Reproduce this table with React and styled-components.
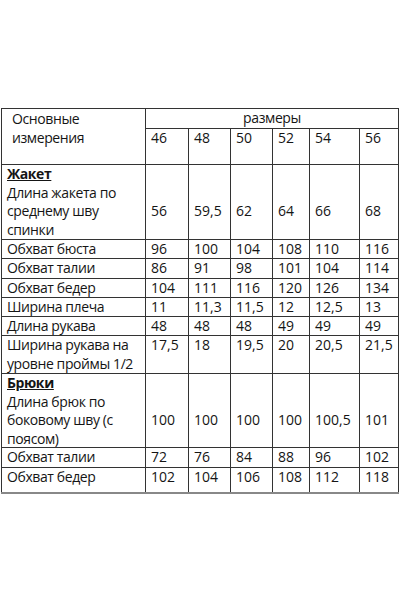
import React from "react";
import styled, { createGlobalStyle } from "styled-components";

const Global = createGlobalStyle`
  html, body { margin: 0; padding: 0; background: #fff; }
  body { width: 400px; height: 600px; overflow: hidden; }
`;

const Page = styled.div`
  padding: 108px 0 0 1px;
  font-family: "Open Sans", "Noto Sans", sans-serif;
  font-size: 14px;
  color: #151515;
`;

const Grid = styled.div`
  display: grid;
  width: 398px;
  box-sizing: border-box;
  grid-template-columns: 143px 42px 41px 41px 36px 49px 38px;
  grid-template-rows: 19px 35px 74px 18px 19px 18px 18px 18px 37px 73px 19px 24px;
  gap: 1px;
  padding: 1px 1px 0 1px;
  background: #333;
  border-bottom: 2px solid #888;
`;

const Cell = styled.div`
  background: #fff;
  padding: ${(p) => p.$top || 0}px 0 0 ${(p) => p.$left ?? 5}px;
  line-height: 18.5px;
  white-space: nowrap;
  overflow: hidden;
  letter-spacing: ${(p) => (p.$label ? "-0.4px" : "0")};
  grid-row: ${(p) => (p.$rowSpan ? `span ${p.$rowSpan}` : "auto")};
  grid-column: ${(p) => (p.$colSpan ? `span ${p.$colSpan}` : "auto")};
  text-align: ${(p) => (p.$center ? "center" : "left")};
`;

const Section = styled.span`
  font-weight: 700;
  text-decoration: underline;
`;

const sizes = ["46", "48", "50", "52", "54", "56"];

const rows = [
  { label: [<Section key="s">Жакет</Section>, "Длина жакета по", "среднему шву", "спинки"], values: ["56", "59,5", "62", "64", "66", "68"], offset: 37 },
  { label: ["Обхват бюста"], values: ["96", "100", "104", "108", "110", "116"] },
  { label: ["Обхват талии"], values: ["86", "91", "98", "101", "104", "114"] },
  { label: ["Обхват бедер"], values: ["104", "111", "116", "120", "126", "134"] },
  { label: ["Ширина плеча"], values: ["11", "11,3", "11,5", "12", "12,5", "13"] },
  { label: ["Длина рукава"], values: ["48", "48", "48", "49", "49", "49"] },
  { label: ["Ширина рукава на", "уровне проймы 1/2"], values: ["17,5", "18", "19,5", "20", "20,5", "21,5"] },
  { label: [<Section key="s">Брюки</Section>, "Длина брюк по", "боковому шву (с", "поясом)"], values: ["100", "100", "100", "100", "100,5", "101"], offset: 37 },
  { label: ["Обхват талии"], values: ["72", "76", "84", "88", "96", "102"] },
  { label: ["Обхват бедер"], values: ["102", "104", "106", "108", "112", "118"] },
];

export default function App() {
  return (
    <Page>
      <Global />
      <Grid>
        <Cell $rowSpan={2} $left={10} $top={1} $label>
          Основные
          <br />
          измерения
        </Cell>
        <Cell $colSpan={6} $left={0} $center $label>
          размеры
        </Cell>
        {sizes.map((s) => (
          <Cell key={s}>{s}</Cell>
        ))}
        {rows.map((r, i) => (
          <React.Fragment key={i}>
            <Cell $label>
              {r.label.map((l, j) => (
                <React.Fragment key={j}>
                  {j > 0 && <br />}
                  {l}
                </React.Fragment>
              ))}
            </Cell>
            {r.values.map((v, j) => (
              <Cell key={j} $top={r.offset || 0}>
                {v}
              </Cell>
            ))}
          </React.Fragment>
        ))}
      </Grid>
    </Page>
  );
}
